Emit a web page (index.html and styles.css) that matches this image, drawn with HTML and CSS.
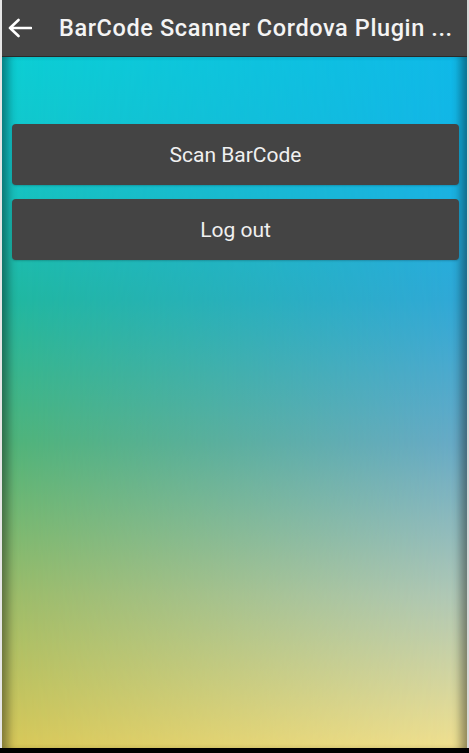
FILE: index.html
```html
<!DOCTYPE html>
<html lang="en">
<head>
<meta charset="utf-8">
<title>BarCode Scanner Cordova Plugin</title>
<link rel="stylesheet" href="styles.css">
</head>
<body>
<div class="frame">
  <header class="toolbar">
    <button class="back" aria-label="Back">
      <svg width="24" height="20" viewBox="0 0 24 20"><path d="M2 10H23M10.5 2L2 10l8.5 8" fill="none" stroke="#fff" stroke-width="2.6" stroke-linecap="round" stroke-linejoin="round"/></svg>
    </button>
    <h1 class="title">BarCode Scanner Cordova Plugin ...</h1>
  </header>
  <main class="content">
    <button class="btn">Scan BarCode</button>
    <button class="btn">Log out</button>
  </main>
</div>
</body>
</html>
```
FILE: styles.css
```css
html, body {
  margin: 0;
  padding: 0;
  width: 469px;
  height: 753px;
  overflow: hidden;
  background: #000;
  font-family: Roboto, "Noto Sans", sans-serif;
}
.frame {
  display: flex;
  flex-direction: column;
  height: 748px;
  border-left: 2px solid #e6e6e6;
  border-right: 2px solid #d8d8d8;
  box-sizing: border-box;
}
.toolbar {
  display: flex;
  align-items: center;
  height: 56px;
  background: #444444;
  border-bottom: 1px solid #2a2a2a;
  flex-shrink: 0;
}
.back {
  background: none;
  border: 0;
  padding: 0;
  margin: 0 0 0 6px;
  width: 24px;
  height: 20px;
  display: flex;
  align-items: center;
  justify-content: center;
}
.title {
  margin: 0 0 0 27px;
  font-size: 23.5px;
  font-weight: 500;
  color: #f4f4f4;
  white-space: nowrap;
  letter-spacing: 0.6px;
}
.content {
  flex: 1;
  position: relative;
  display: flex;
  flex-direction: column;
  gap: 14px;
  padding: 67px 8px 0 10px;
  background: linear-gradient(to bottom, #0ccfd4 0%, #14c6c8 15%, #20b8a0 35%, #50b478 56%, #9cbc68 78%, #d8c858 100%);
}
.content::before {
  content: "";
  position: absolute;
  inset: 0;
  background: linear-gradient(to bottom, #10b8e8 0%, #14b4e6 15%, #30a8d8 35%, #68aac8 56%, #b0c8b8 78%, #f0e090 100%);
  -webkit-mask-image: linear-gradient(to right, transparent 0%, #000 100%);
  mask-image: linear-gradient(to right, transparent 0%, #000 100%);
  pointer-events: none;
}
.content::after {
  content: "";
  position: absolute;
  inset: 0;
  box-shadow: inset 12px 0 10px -6px rgba(0, 0, 0, 0.4), inset -12px 0 10px -6px rgba(0, 0, 0, 0.4);
  pointer-events: none;
}
.btn {
  position: relative;
  z-index: 1;
  height: 61px;
  border: 0;
  border-radius: 4px;
  background: #444444;
  color: #f0f0f0;
  font-family: Roboto, "Noto Sans", sans-serif;
  font-size: 21px;
  font-weight: 400;
  box-shadow: 0 1px 2px rgba(0, 0, 0, 0.2);
}
```
